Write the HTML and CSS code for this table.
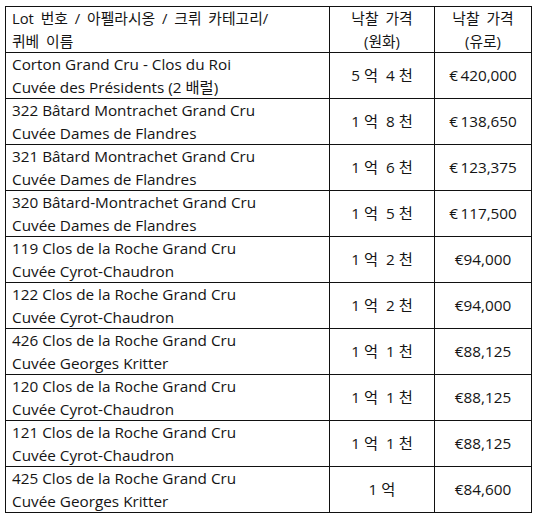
FILE: index.html
```html
<!DOCTYPE html>
<html lang="ko">
<head>
<meta charset="utf-8">
<link rel="stylesheet" href="styles.css">
</head>
<body>
<table class="lots">
  <colgroup>
    <col class="c-name">
    <col class="c-krw">
    <col class="c-eur">
  </colgroup>
  <thead>
    <tr>
      <th class="name head">Lot 번호 / 아펠라시옹 / 크뤼 카테고리/<br>퀴베 이름</th>
      <th class="num head">낙찰 가격<br>(원화)</th>
      <th class="num head">낙찰 가격<br>(유로)</th>
    </tr>
  </thead>
  <tbody>
    <tr><td class="name">Corton Grand Cru - Clos du Roi<br>Cuvée des Présidents (2 배럴)</td><td class="num">5 억 &nbsp;4 천</td><td class="num">€&#8201;420,000</td></tr>
    <tr><td class="name">322 Bâtard Montrachet Grand Cru<br>Cuvée Dames de Flandres</td><td class="num">1 억 &nbsp;8 천</td><td class="num">€&#8201;138,650</td></tr>
    <tr><td class="name">321 Bâtard Montrachet Grand Cru<br>Cuvée Dames de Flandres</td><td class="num">1 억 &nbsp;6 천</td><td class="num">€&#8201;123,375</td></tr>
    <tr><td class="name">320 Bâtard-Montrachet Grand Cru<br>Cuvée Dames de Flandres</td><td class="num">1 억 &nbsp;5 천</td><td class="num">€&#8201;117,500</td></tr>
    <tr><td class="name">119 Clos de la Roche Grand Cru<br>Cuvée Cyrot-Chaudron</td><td class="num">1 억 &nbsp;2 천</td><td class="num">€94,000</td></tr>
    <tr><td class="name">122 Clos de la Roche Grand Cru<br>Cuvée Cyrot-Chaudron</td><td class="num">1 억 &nbsp;2 천</td><td class="num">€94,000</td></tr>
    <tr><td class="name">426 Clos de la Roche Grand Cru<br>Cuvée Georges Kritter</td><td class="num">1 억 &nbsp;1 천</td><td class="num">€88,125</td></tr>
    <tr><td class="name">120 Clos de la Roche Grand Cru<br>Cuvée Cyrot-Chaudron</td><td class="num">1 억 &nbsp;1 천</td><td class="num">€88,125</td></tr>
    <tr><td class="name">121 Clos de la Roche Grand Cru<br>Cuvée Cyrot-Chaudron</td><td class="num">1 억 &nbsp;1 천</td><td class="num">€88,125</td></tr>
    <tr><td class="name">425 Clos de la Roche Grand Cru<br>Cuvée Georges Kritter</td><td class="num">1 억</td><td class="num">€84,600</td></tr>
  </tbody>
</table>
</body>
</html>
```

FILE: styles.css
```css
html, body {
  margin: 0;
  padding: 0;
  background: #ffffff;
}
body {
  padding: 6px 0 0 5px;
  font-family: "Open Sans", "Noto Sans CJK KR", sans-serif;
  font-size: 15.3px;
  color: #141414;
}
.lots {
  border-collapse: collapse;
  table-layout: fixed;
  width: 526px;
}
.c-name { width: 324px; }
.c-krw { width: 105px; }
.c-eur { width: 97px; }
.lots th, .lots td {
  border: 1px solid #111111;
  padding: 0 6px;
  height: 45px;
  line-height: 22.5px;
  font-weight: normal;
  vertical-align: middle;
  white-space: nowrap;
}
.lots .head {
  font-size: 14.8px;
  word-spacing: 3px;
}
.lots .name { text-align: left; }
.lots .num { text-align: center; }
```
